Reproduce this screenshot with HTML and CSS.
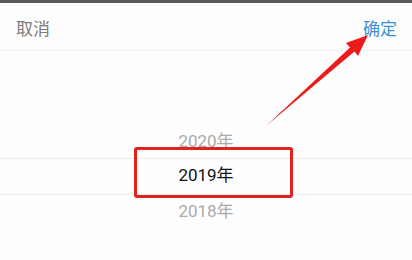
FILE: index.html
```html
<!DOCTYPE html>
<html lang="zh">
<head>
<meta charset="utf-8">
<link rel="stylesheet" href="styles.css">
</head>
<body>
<div class="sheet">
  <div class="topbar"></div>
  <div class="header">
    <span class="btn cancel">取消</span>
    <span class="btn ok">确定</span>
  </div>
  <div class="wheel">
    <div class="item above">2020年</div>
    <div class="item selected">2019年</div>
    <div class="item below">2018年</div>
  </div>
  <div class="highlight"></div>
  <svg class="arrow" width="412" height="260" viewBox="0 0 412 260">
    <polygon points="368,35 346,43 350,47.5 266,126 354.5,51.5 358,56" fill="#ee1c18"/>
  </svg>
</div>
</body>
</html>
```
FILE: styles.css
```css
html, body {
  margin: 0;
  padding: 0;
  background: #fff;
}
.sheet {
  position: relative;
  width: 412px;
  height: 260px;
  overflow: hidden;
  background: #fefefe;
  font-family: Roboto, "Noto Sans CJK SC", sans-serif;
}
.topbar {
  height: 3px;
  background: #5a5a5a;
}
.header {
  height: 47px;
  display: flex;
  align-items: center;
  justify-content: space-between;
  padding: 0 15px 0 16px;
  border-bottom: 1px solid #efefef;
  background: #fdfdfd;
}
.btn {
  font-size: 17px;
  font-family: "Noto Sans CJK SC", sans-serif;
  line-height: 20px;
  margin-top: 2px;
}
.cancel { color: #7a7a7a; }
.ok { color: #3b8fd6; }
.wheel {
  padding-top: 72px;
}
.item {
  box-sizing: border-box;
  display: flex;
  align-items: center;
  justify-content: center;
  font-size: 17px;
  line-height: 20px;
  color: #aaaaaa;
}
.item.above {
  height: 35px;
  padding-bottom: 0;
}
.item.selected {
  color: #111;
  height: 37px;
  border-top: 1px solid #ececec;
  border-bottom: 1px solid #ececec;
  padding-bottom: 3px;
}
.item.below {
  height: 36px;
  padding-bottom: 4px;
}
.highlight {
  position: absolute;
  left: 134px;
  top: 147px;
  width: 153px;
  height: 45px;
  border: 3px solid #e3211d;
  border-radius: 3px;
}
.arrow {
  position: absolute;
  left: 0;
  top: 0;
}
```
